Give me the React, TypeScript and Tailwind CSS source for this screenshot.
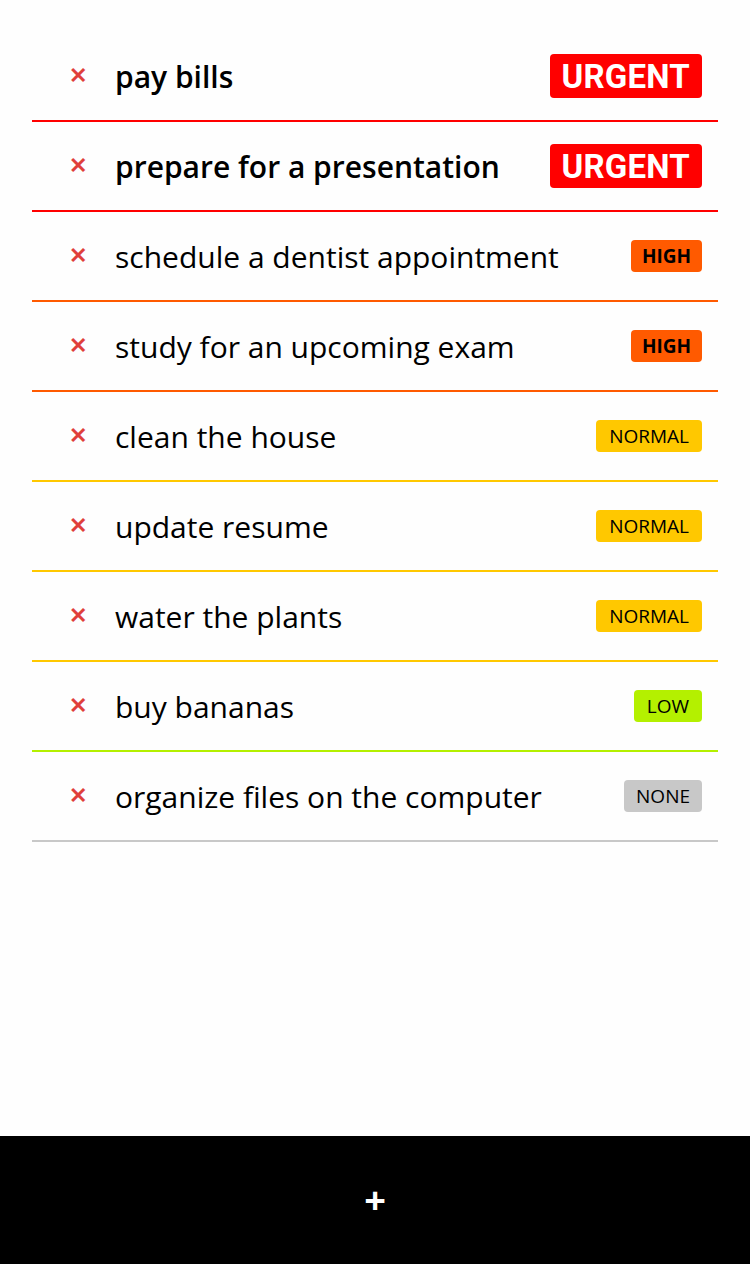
import React from 'react'

type Priority = 'urgent' | 'high' | 'normal' | 'low' | 'none'

const TASKS: { title: string; priority: Priority }[] = [
  { title: 'pay bills', priority: 'urgent' },
  { title: 'prepare for a presentation', priority: 'urgent' },
  { title: 'schedule a dentist appointment', priority: 'high' },
  { title: 'study for an upcoming exam', priority: 'high' },
  { title: 'clean the house', priority: 'normal' },
  { title: 'update resume', priority: 'normal' },
  { title: 'water the plants', priority: 'normal' },
  { title: 'buy bananas', priority: 'low' },
  { title: 'organize files on the computer', priority: 'none' },
]

// border + badge styles per priority
const STYLE: Record<Priority, { border: string; badge: string; label: string }> = {
  urgent: {
    border: 'border-[#ff0000]',
    badge: 'bg-[#ff0000] text-white h-[44px] px-[12px] text-[33px] font-bold font-["Roboto"] tracking-[0.2px]',
    label: 'URGENT',
  },
  high: {
    border: 'border-[#ff5a00]',
    badge: 'bg-[#ff5a00] text-black h-[32px] px-[11px] text-[19px] font-bold',
    label: 'HIGH',
  },
  normal: {
    border: 'border-[#ffc800]',
    badge: 'bg-[#ffc800] text-black h-[32px] px-[13px] text-[19px]',
    label: 'NORMAL',
  },
  low: {
    border: 'border-[#b4f000]',
    badge: 'bg-[#b4f000] text-black h-[32px] px-[13px] text-[19px]',
    label: 'LOW',
  },
  none: {
    border: 'border-[#c8c8c8]',
    badge: 'bg-[#c8c8c8] text-black h-[32px] px-[12px] text-[19px]',
    label: 'NONE',
  },
}

function TaskRow({ title, priority }: { title: string; priority: Priority }) {
  const s = STYLE[priority]
  return (
    <li className={`flex items-center h-[90px] border-b-2 ${s.border} pl-[37px] pr-[16px]`}>
      <span className="text-[#e0403a] text-[22px] font-bold leading-none w-[46px] -mt-[4px]">✕</span>
      <span className={`flex-1 text-[30px] text-black ${priority === 'urgent' ? 'font-semibold' : ''}`}>
        {title}
      </span>
      <span className={`flex items-center rounded-[4px] leading-none ${s.badge}`}>{s.label}</span>
    </li>
  )
}

export default function App() {
  return (
    <div className="h-screen flex flex-col bg-[#fefefe] font-['Open_Sans','Noto_Sans',sans-serif]">
      <div className="flex-1 px-[32px] pt-[32px]">
        <ul>
          {TASKS.map(t => (
            <TaskRow key={t.title} {...t} />
          ))}
        </ul>
      </div>
      <div className="h-[128px] bg-black flex items-center justify-center">
        <span className="text-white text-[38px] font-bold leading-none -mt-[2px]">+</span>
      </div>
    </div>
  )
}
